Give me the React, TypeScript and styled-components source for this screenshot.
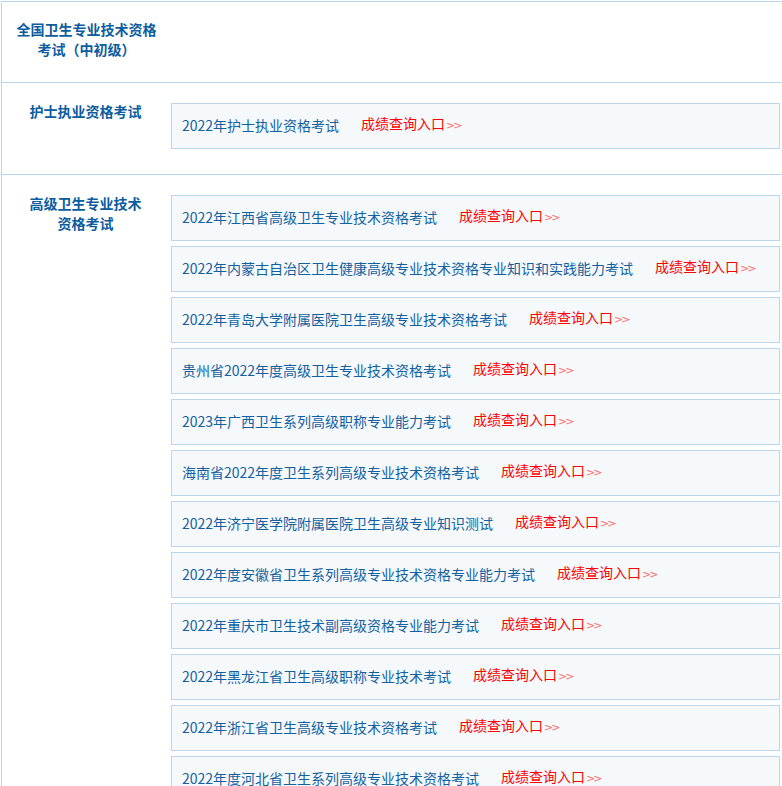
import React from 'react';
import styled, { createGlobalStyle } from 'styled-components';

const GlobalStyle = createGlobalStyle`
  html, body {
    margin: 0;
    padding: 0;
    background: #fff;
  }
  body {
    font-family: "Noto Sans CJK SC", "Liberation Sans", sans-serif;
    font-size: 14px;
  }
`;

const Board = styled.div`
  margin: 1px 0 0 1px;
  border-left: 1px solid #bcd6ec;
  border-top: 1px solid #bcd6ec;
`;

const Section = styled.div`
  display: grid;
  grid-template-columns: 169px 1fr;
  border-bottom: 1px solid #bcd6ec;
`;

const SectionTitle = styled.div<{ $wide?: boolean }>`
  padding: ${(p) => (p.$wide ? '17px 8px 23px' : '18px 23px 0 21px')};
  text-align: center;
  font-weight: bold;
  font-size: 14px;
  line-height: 20px;
  color: #0c5d9e;
`;

const ItemList = styled.div`
  display: flex;
  flex-direction: column;
  gap: 5px;
  padding: 20px 2px 25px 0;
`;

const ItemBox = styled.div`
  display: flex;
  align-items: center;
  height: 41px;
  padding: 0 10px 3px;
  border: 1px solid #bcd6ec;
  background: #f5f9fc;
  white-space: nowrap;
  overflow: hidden;
`;

const ItemName = styled.span`
  color: #14609f;
  line-height: 20px;
`;

const ScoreLink = styled.a`
  margin-left: 22px;
  color: #ff0000;
  line-height: 20px;
  text-decoration: none;
  cursor: pointer;
`;

const Arrow = styled.span`
  font-family: "DejaVu Sans", sans-serif;
  font-size: 11px;
  color: #ff6b6b;
  letter-spacing: -2px;
  margin-left: 1px;
`;

const nurseExams = ['2022年护士执业资格考试'];

const seniorExams = [
  '2022年江西省高级卫生专业技术资格考试',
  '2022年内蒙古自治区卫生健康高级专业技术资格专业知识和实践能力考试',
  '2022年青岛大学附属医院卫生高级专业技术资格考试',
  '贵州省2022年度高级卫生专业技术资格考试',
  '2023年广西卫生系列高级职称专业能力考试',
  '海南省2022年度卫生系列高级专业技术资格考试',
  '2022年济宁医学院附属医院卫生高级专业知识测试',
  '2022年度安徽省卫生系列高级专业技术资格专业能力考试',
  '2022年重庆市卫生技术副高级资格专业能力考试',
  '2022年黑龙江省卫生高级职称专业技术考试',
  '2022年浙江省卫生高级专业技术资格考试',
  '2022年度河北省卫生系列高级专业技术资格考试',
];

const ExamItem = ({ name }: { name: string }) => (
  <ItemBox>
    <ItemName>{name}</ItemName>
    <ScoreLink>
      成绩查询入口<Arrow>&gt;&gt;</Arrow>
    </ScoreLink>
  </ItemBox>
);

export default function App() {
  return (
    <>
      <GlobalStyle />
      <Board>
        <Section>
          <SectionTitle $wide>全国卫生专业技术资格考试（中初级）</SectionTitle>
          <div />
        </Section>
        <Section>
          <SectionTitle>护士执业资格考试</SectionTitle>
          <ItemList>
            {nurseExams.map((name) => (
              <ExamItem key={name} name={name} />
            ))}
          </ItemList>
        </Section>
        <Section>
          <SectionTitle>高级卫生专业技术资格考试</SectionTitle>
          <ItemList>
            {seniorExams.map((name) => (
              <ExamItem key={name} name={name} />
            ))}
          </ItemList>
        </Section>
      </Board>
    </>
  );
}
